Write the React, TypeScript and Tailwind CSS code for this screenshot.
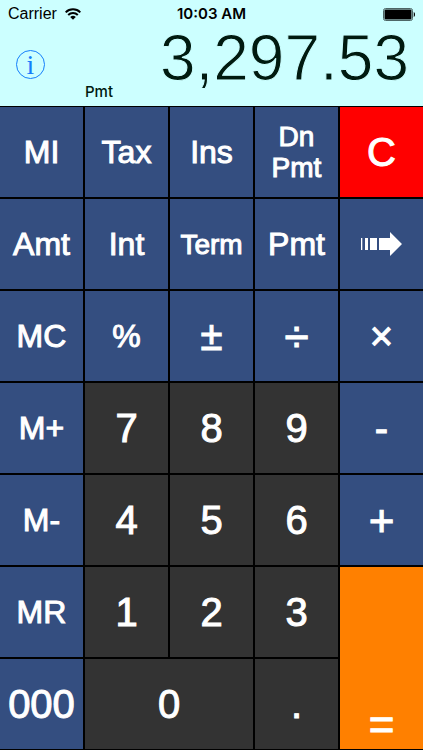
import React, { useState } from 'react';
import clsx from 'clsx';

interface Key {
  label: React.ReactNode;
  name: string;
  className?: string;
}

const FUNC = 'bg-[#344e80] text-[32px]';
const FUNC_SMALL = 'bg-[#344e80] text-[28px]';
const OPERATOR = 'bg-[#344e80] text-[40px]';
const OPERATOR_LARGE = 'bg-[#344e80] text-[44px]';
const DIGIT = 'bg-[#333333] text-[40px]';

const ArrowIcon = () => (
  <svg viewBox="0 0 42 24" className="h-6 w-[42px]" fill="currentColor" aria-hidden="true">
    <path d="M0 6h1.3v12H0zM4 6h3v12H4zM9 6h7v12H9zM18 6h11V0l12 12-12 12v-6H18z" />
  </svg>
);

const WifiIcon = () => (
  <svg viewBox="0 0 16 12" className="h-3 w-4" fill="none" stroke="black" strokeWidth="2" aria-hidden="true">
    <path d="M.7 4.4a10.3 10.3 0 0 1 14.6 0M3.2 7a6.8 6.8 0 0 1 9.6 0" />
    <path d="M5.2 9a4 4 0 0 1 5.6 0L8 11.8z" fill="black" stroke="none" />
  </svg>
);

const BatteryIcon = () => (
  <svg viewBox="0 0 32 13" className="h-[13px] w-8" aria-hidden="true">
    <rect x=".5" y=".5" width="29" height="12" rx="2" fill="none" stroke="#4d6666" />
    <rect x="1.5" y="1.5" width="27" height="10" rx="1" fill="black" />
    <path d="M31 4.5c1.3.8 1.3 3.2 0 4z" fill="black" stroke="black" strokeWidth=".5" />
  </svg>
);

const KEYS: Key[] = [
  { label: 'MI', name: 'MI', className: FUNC },
  { label: 'Tax', name: 'Tax', className: FUNC },
  { label: 'Ins', name: 'Ins', className: FUNC },
  { label: 'Dn Pmt', name: 'Dn Pmt', className: FUNC_SMALL },
  { label: 'C', name: 'C', className: 'bg-[#ff0000] text-[40px]' },

  { label: 'Amt', name: 'Amt', className: FUNC },
  { label: 'Int', name: 'Int', className: FUNC },
  { label: 'Term', name: 'Term', className: FUNC_SMALL },
  { label: 'Pmt', name: 'Pmt', className: FUNC },
  { label: <ArrowIcon />, name: 'Backspace', className: FUNC },

  { label: 'MC', name: 'MC', className: FUNC },
  { label: '%', name: '%', className: FUNC },
  { label: '±', name: '±', className: OPERATOR },
  { label: '÷', name: '÷', className: OPERATOR_LARGE },
  { label: '×', name: '×', className: OPERATOR },

  { label: 'M+', name: 'M+', className: FUNC },
  { label: '7', name: '7', className: DIGIT },
  { label: '8', name: '8', className: DIGIT },
  { label: '9', name: '9', className: DIGIT },
  { label: '-', name: '-', className: OPERATOR },

  { label: 'M-', name: 'M-', className: FUNC },
  { label: '4', name: '4', className: DIGIT },
  { label: '5', name: '5', className: DIGIT },
  { label: '6', name: '6', className: DIGIT },
  { label: '+', name: '+', className: OPERATOR_LARGE },

  { label: 'MR', name: 'MR', className: FUNC },
  { label: '1', name: '1', className: DIGIT },
  { label: '2', name: '2', className: DIGIT },
  { label: '3', name: '3', className: DIGIT },
  { label: '=', name: '=', className: 'row-span-2 items-end bg-[#ff8000] text-[44px] leading-[48px]' },

  { label: '000', name: '000', className: 'bg-[#344e80] text-[40px]' },
  { label: '0', name: '0', className: 'col-span-2 bg-[#333333] text-[40px]' },
  { label: '.', name: '.', className: DIGIT },
];

export default function App() {
  const [value, setValue] = useState('3,297.53');
  const [typing, setTyping] = useState(false);

  const press = (name: string) => {
    if (name === 'C') {
      setValue('0');
      setTyping(false);
      return;
    }
    if (name === 'Backspace') {
      setValue(v => v.slice(0, -1) || '0');
      return;
    }
    if (/^[0-9.]+$/.test(name)) {
      setValue(v => (typing ? v + name : name).slice(0, 9));
      setTyping(true);
    }
  };

  return (
    <div className="flex min-h-screen flex-col bg-black font-['Liberation_Sans',Arial,sans-serif]">
      <header className="flex h-[106px] flex-col bg-[#ccffff] text-[#001a10]">
        {/* Status bar */}
        <div className="grid h-7 grid-cols-3 items-center px-2 text-base text-black">
          <div className="flex items-center gap-2">
            <span>Carrier</span>
            <WifiIcon />
          </div>
          <span className="text-center font-['Inter',sans-serif] text-[15px] font-semibold whitespace-nowrap">10:03 AM</span>
          <div className="flex justify-end">
            <BatteryIcon />
          </div>
        </div>

        {/* Display */}
        <div className="flex flex-1 items-start justify-between pr-3.5 pl-4">
          <button
            type="button"
            aria-label="Info"
            className="mt-[22px] flex size-[29px] items-center justify-center rounded-full border border-[#147efb] font-['Liberation_Serif',serif] text-[28px] leading-none text-[#147efb]"
          >
            i
          </button>
          <span className="mt-14 mr-auto ml-10 font-['Inter',sans-serif] text-[15px] leading-4 font-medium">Pmt</span>
          {/* The outline in the background colour thins the digits */}
          <output className="text-[64px] leading-[60px] [-webkit-text-stroke:1px_#ccffff]">{value}</output>
        </div>
      </header>

      {/* Keypad */}
      <main className="grid flex-1 auto-rows-fr grid-cols-5 gap-0.5 py-px">
        {KEYS.map(key => (
          <button
            key={key.name}
            type="button"
            aria-label={key.name}
            onClick={() => press(key.name)}
            className={clsx(
              'flex min-w-0 justify-center text-center text-white [-webkit-text-stroke:1px] active:brightness-75',
              key.name !== '=' && 'items-center leading-[31px]',
              key.className
            )}
          >
            {key.label}
          </button>
        ))}
      </main>
    </div>
  );
}
